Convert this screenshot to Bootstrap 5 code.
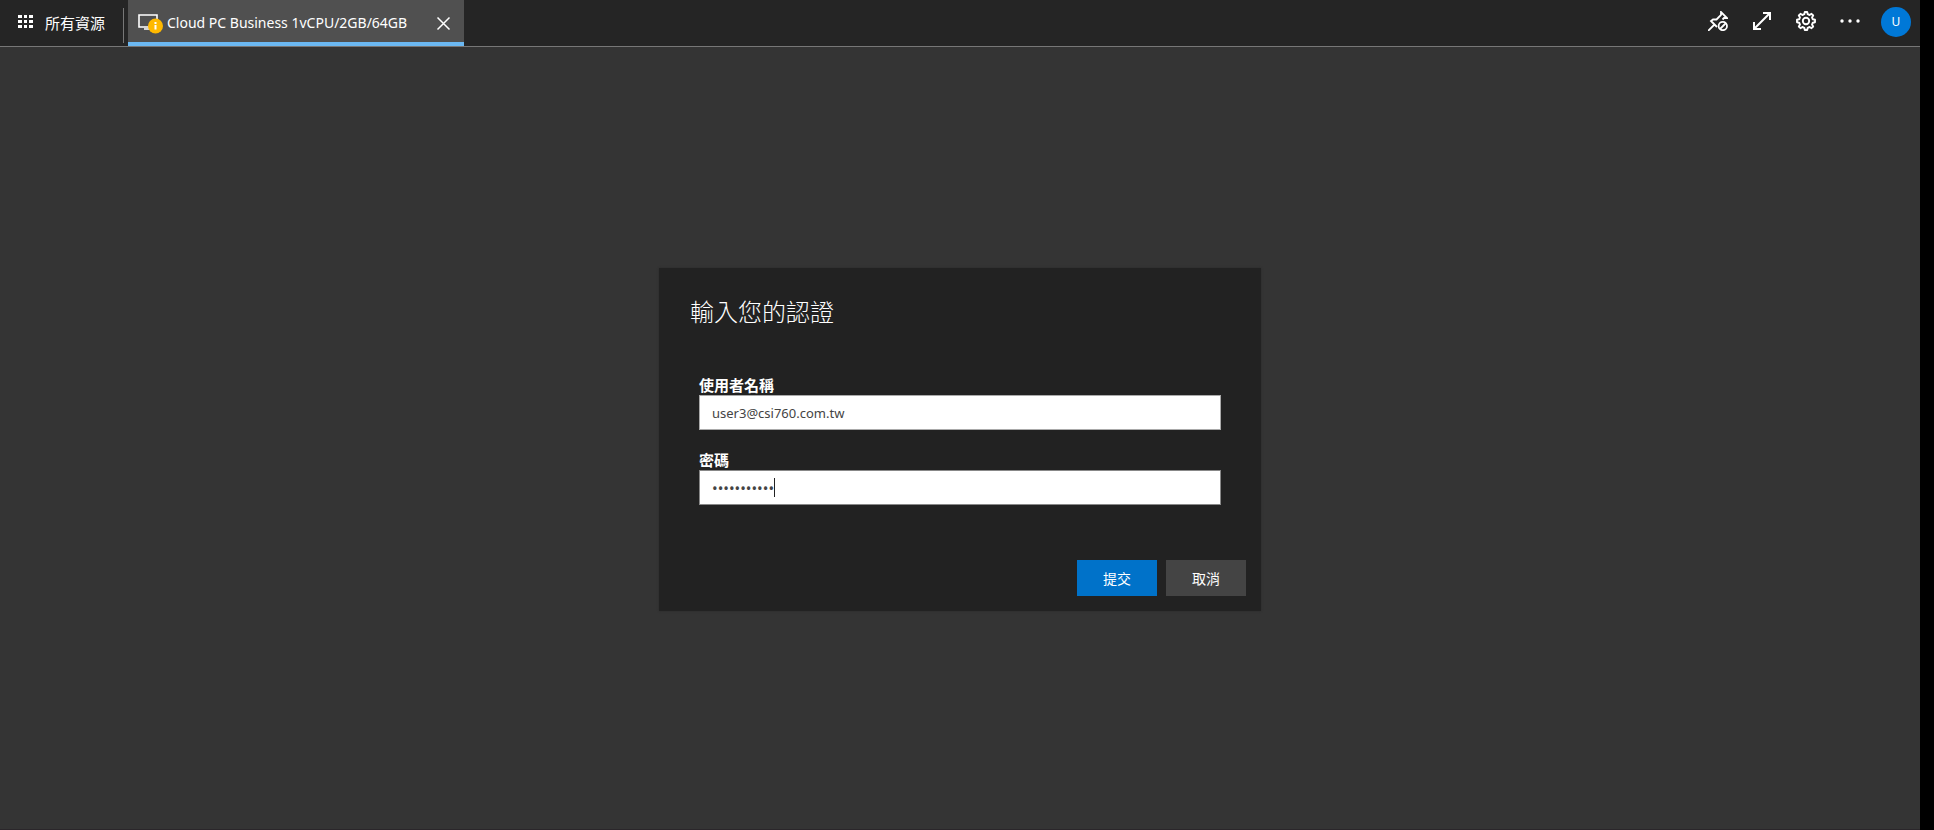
<!DOCTYPE html>
<html lang="zh-Hant">
<head>
<meta charset="utf-8">
<meta name="viewport" content="width=device-width, initial-scale=1">
<title>Cloud PC</title>
<link href="https://cdn.jsdelivr.net/npm/bootstrap@5.3.0/dist/css/bootstrap.min.css" rel="stylesheet">
<style>
body{background:#000;color:#fff;font-family:"Noto Sans","Noto Sans CJK TC",sans-serif;font-size:14px;line-height:20px}
.client{background:#343434;margin-right:14px;border-bottom:1px solid #2a262a}
.topbar{background:#252525;border-bottom:1px solid #777;height:47px}
.plain{background:none;border:0;padding:0;color:#fff}
.plain svg{display:block}
.all-link{padding:0 0 0 18px;width:123px;gap:12px;font-size:15px}
.all-link svg{margin-bottom:4px}
.divider{width:1px;height:35px;margin-top:4px;background:#777}
.session-tab{width:336px;background:#505050;border-bottom:4px solid #6bb8f2;margin-left:4px;padding:4px 13px 0 10px}
.session-tab .title{margin-left:3px}
.tools{gap:24px;padding:0 9px 5px 0}
.avatar{width:30px;height:30px;background:#0078d7;font-size:12px;margin:3px 0 0 -3px}
main{padding-top:3px}
.sign-in{width:602px;max-width:100%;background:#222;padding:28px 15px 15px;box-shadow:0 0 2px #2a2a2a}
.sign-in h1{font-family:"Noto Sans CJK TC",sans-serif;font-size:24px;line-height:30px;font-weight:300;margin:0 16px 51px}
.fields{margin:0 25px}
.fields label{display:block;font-family:"Noto Sans CJK TC",sans-serif;font-size:15px;line-height:16px;padding-bottom:2px;font-weight:700}
.second{margin-top:22px}
.fields .form-control{height:35px;border:1px solid #aaa;border-radius:0;background:#fff;color:#444;padding:0 12px;font-size:13px;box-shadow:none}
.fields .secret{font-size:15px;border-color:#888}
.caret{position:absolute;left:75px;top:8px;width:1px;height:19px;background:#222}
.actions{gap:9px;margin-top:55px}
.actions .btn{width:80px;height:36px;border:0;border-radius:0;padding:0;font-family:"Noto Sans CJK TC",sans-serif;font-size:14px;line-height:34px;color:#fff}
.actions .submit{background:#0072c9}
.actions .cancel{background:#444}
</style>
</head>
<body>
<div class="client min-vh-100 d-flex flex-column">
<header class="topbar d-flex">
<button class="plain all-link d-flex align-items-center">
<svg width="15" height="13" viewBox="0 0 15 13" fill="#fff"><path d="M0 0h4v3H0zM6 0h3v3H6zM11 0h4v3h-4zM0 5h4v3H0zM6 5h3v3H6zM11 5h4v3h-4zM0 10h4v3H0zM6 10h3v3H6zM11 10h4v3h-4z"/></svg>
<span class="text-nowrap">所有資源</span></button>
<div class="divider align-self-center"></div>
<div class="session-tab d-flex align-items-center">
<svg width="26" height="22" viewBox="0 0 26 22" fill="none"><path d="M1 3h18v12H1zM6 17h6" stroke="#fff" stroke-width="1.6"/><circle cx="17.5" cy="14" r="7.5" fill="#ffb900"/><path d="M16.5 10h2v2h-2zM16.5 13h2v4.500h-2z" fill="#fff"/></svg>
<span class="title text-nowrap">Cloud PC Business 1vCPU/2GB/64GB</span>
<button class="plain ms-auto" aria-label="關閉"><svg width="15" height="15" viewBox="0 0 15 15"><path d="M1.500 1.500l12 12M13.500 1.500l-12 12" stroke="#fff" stroke-width="1.5"/></svg></button>
</div>
<div class="tools d-flex align-items-center ms-auto">
<button class="plain" aria-label="取消釘選"><svg width="20" height="20" viewBox="0 0 20 20" fill="none" stroke="#fff" stroke-width="1.8"><path d="M0 20l7-7M9 16l-6-6 2-1.500h3.500l4.500-4.500V1l6 6h-3l-1.500 1.500"/><circle cx="14.8" cy="15" r="4.200"/><path d="M12 18l6-6"/></svg></button>
<button class="plain" aria-label="全螢幕"><svg width="20" height="20" viewBox="0 0 20 20" fill="none" stroke="#fff" stroke-width="2"><path d="M2 18L18 2M11 2h7v7M2 11v7h7"/></svg></button>
<button class="plain" aria-label="設定"><svg width="20" height="20" viewBox="-10 -10 20 20" fill="none" stroke="#fff" stroke-width="1.9" stroke-linejoin="round"><path d="M-1.700-6.800L-1.200-9H1.200L1.700-6.800 3.600-6 5.500-7.200 7.200-5.500 6-3.600 6.800-1.700 9-1.200V1.200L6.800 1.700 6 3.600 7.200 5.500 5.500 7.200 3.600 6 1.700 6.800 1.200 9H-1.200L-1.700 6.800-3.600 6-5.500 7.200-7.200 5.500-6 3.600-6.800 1.700-9 1.200V-1.200L-6.800-1.700-6-3.600-7.200-5.500-5.500-7.200-3.600-6z"/><circle r="3.200"/></svg></button>
<button class="plain" aria-label="更多"><svg width="20" height="20" viewBox="0 0 20 20" fill="#fff"><circle cx="2" cy="10" r="1.700"/><circle cx="10" cy="10" r="1.700"/><circle cx="18" cy="10" r="1.700"/></svg></button>
<button class="plain avatar rounded-circle">U</button>
</div>
</header>
<main class="flex-grow-1 d-flex align-items-center justify-content-center">
<form class="sign-in">
<h1>輸入您的認證</h1>
<div class="fields">
<label for="user">使用者名稱</label>
<input class="form-control" id="user" type="text" value="user3@csi760.com.tw">
<label for="pass" class="second">密碼</label>
<div class="position-relative"><input class="form-control secret" id="pass" type="password" value="password123"><span class="caret"></span></div>
</div>
<div class="actions d-flex justify-content-end"><button type="button" class="btn submit">提交</button><button type="button" class="btn cancel">取消</button></div>
</form>
</main>
</div>
<script src="https://cdn.jsdelivr.net/npm/bootstrap@5.3.0/dist/js/bootstrap.bundle.min.js"></script>
</body>
</html>
